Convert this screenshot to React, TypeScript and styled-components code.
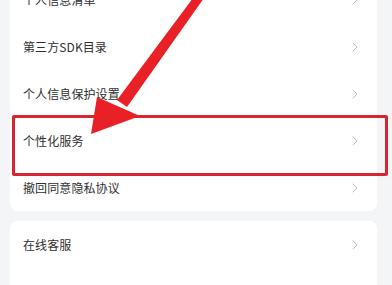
import React from "react";
import styled, { createGlobalStyle } from "styled-components";

const Global = createGlobalStyle`
  html, body { margin: 0; padding: 0; background: #f4f5f7; }
  body { font-family: "Noto Sans CJK SC", "Noto Sans", sans-serif; overflow: hidden; }
`;

const Page = styled.div`
  position: relative;
  width: 392px;
  height: 285px;
  overflow: hidden;
  background: #f4f5f7;
`;

const List = styled.div`
  display: flex;
  flex-direction: column;
  gap: 10px;
  padding: 0 15px 0 10px;
  margin-top: -24px;
`;

const Card = styled.div`
  background: #ffffff;
  border-radius: 8px;
  display: flex;
  flex-direction: column;
`;

const Row = styled.div`
  height: 47px;
  display: flex;
  align-items: center;
  justify-content: space-between;
  padding: 0 19px 0 13px;
  font-size: 12px;
  color: #303030;
  letter-spacing: 0.1px;
`;

const Chevron = () => (
  <svg width="6" height="10" viewBox="0 0 6 10">
    <path d="M1 1 L5 5 L1 9" fill="none" stroke="#bdbdbd" strokeWidth="1" strokeLinecap="round" strokeLinejoin="round" />
  </svg>
);

const Highlight = styled.div`
  position: absolute;
  left: 12px;
  top: 115px;
  width: 376px;
  height: 61px;
  box-sizing: border-box;
  border: 3px solid #d52631;
  border-radius: 2px;
  pointer-events: none;
`;

const ArrowLayer = styled.svg`
  position: absolute;
  left: 0;
  top: 0;
  pointer-events: none;
`;

const items1 = ["个人信息清单", "第三方SDK目录", "个人信息保护设置", "个性化服务", "撤回同意隐私协议"];
const items2 = ["在线客服", "帮助与反馈"];

export default function App() {
  return (
    <Page>
      <Global />
      <List>
        <Card>
          {items1.map((t) => (
            <Row key={t}>
              <span>{t}</span>
              <Chevron />
            </Row>
          ))}
        </Card>
        <Card>
          {items2.map((t) => (
            <Row key={t}>
              <span>{t}</span>
              <Chevron />
            </Row>
          ))}
        </Card>
      </List>
      <Highlight />
      <ArrowLayer width="392" height="285" viewBox="0 0 392 285">
        <polygon points="193,-2 204,-2 127,107 117,100" fill="#ea2027" />
        <polygon points="97,97 140,116 91,134" fill="#ea2027" />
      </ArrowLayer>
    </Page>
  );
}
